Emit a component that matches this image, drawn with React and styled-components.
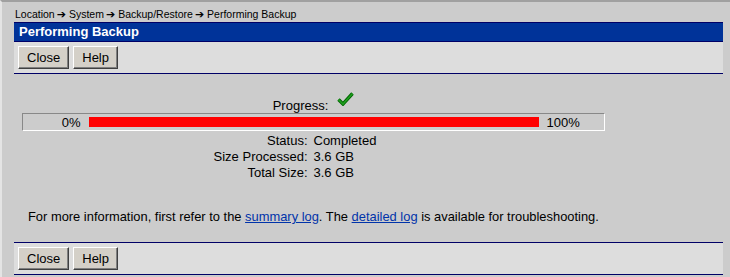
import React from 'react';
import styled, { createGlobalStyle } from 'styled-components';

const GlobalStyle = createGlobalStyle`
  html, body {
    margin: 0;
    padding: 0;
    background: #cccccc;
  }
  body {
    font-family: "Liberation Sans", Arial, sans-serif;
    font-size: 13px;
    color: #000;
  }
`;

const Page = styled.div`
  box-sizing: border-box;
  height: 277px;
  border-top: 2px solid #a0a0a0;
  border-left: 2px solid #e4e4e4;
  padding: 0 7px 0 12px;
  overflow: hidden;
`;

const Breadcrumb = styled.div`
  padding: 4px 0 0 1px;
  height: 16px;
  line-height: 16px;
  font-size: 10.5px;
  white-space: nowrap;
`;

const Arrow = styled.span`
  font-family: "DejaVu Sans", sans-serif;
  font-size: 11px;
  font-weight: bold;
  margin: 0 3px 0 2px;
`;

const TitleBar = styled.div`
  background: #003399;
  border-top: 1px solid #000066;
  border-bottom: 1px solid #000066;
  height: 18px;
  line-height: 18px;
  padding-left: 5px;
  color: #fff;
  font-weight: bold;
  font-size: 13px;
`;

const Toolbar = styled.div`
  display: flex;
  gap: 4px;
  background: #dddddd;
  padding: 4px;
  border-bottom: 1px solid #000066;
  ${p => p.$bottom && `border-top: 1px solid #000066;`}
`;

const Button = styled.button`
  box-sizing: border-box;
  height: 23px;
  padding: 0 8px;
  background: #d4d0c8;
  font-family: "Liberation Sans", Arial, sans-serif;
  font-size: 13px;
  color: #000;
  border: 1px solid;
  border-color: #ffffff #404040 #404040 #ffffff;
  box-shadow: inset -1px -1px 0 #808080;
`;

const Body = styled.div`
  height: 168px;
  padding-top: 18px;
  box-sizing: border-box;
`;

const Progress = styled.div`
  width: 583px;
  margin-left: 8px;
`;

const ProgressHead = styled.div`
  display: flex;
  justify-content: center;
  align-items: flex-end;
  height: 21px;
  line-height: 15px;
`;

const Check = styled.svg`
  margin: 0 0 7px 9px;
`;

const Bar = styled.div`
  box-sizing: border-box;
  height: 18px;
  display: grid;
  grid-template-columns: 1fr 450px 1fr;
  align-items: center;
  border: 1px solid;
  border-color: #888888 #ffffff #ffffff #888888;
`;

const Pct = styled.span`
  text-align: ${p => (p.$end ? 'left' : 'right')};
  padding: ${p => (p.$end ? '0 0 0 8px' : '0 8px 0 0')};
`;

const Fill = styled.div`
  height: 10px;
  background: #ff0000;
`;

const Stats = styled.div`
  margin-top: 2px;
  display: grid;
  grid-template-columns: 1fr 1fr;
  line-height: 16px;
`;

const Label = styled.span`
  text-align: right;
  padding-right: 6px;
`;

const Info = styled.p`
  margin: 28px 0 0 14px;
  line-height: 16px;
  font-size: 12.9px;
`;

const Link = styled.a`
  color: #0033aa;
  text-decoration: underline;
`;

const Buttons = ({ bottom }) => (
  <Toolbar $bottom={bottom}>
    <Button>Close</Button>
    <Button>Help</Button>
  </Toolbar>
);

const stats = [
  ['Status:', 'Completed'],
  ['Size Processed:', '3.6 GB'],
  ['Total Size:', '3.6 GB'],
];

export default function App() {
  return (
    <Page>
      <GlobalStyle />
      <Breadcrumb>
        Location<Arrow>➔</Arrow>System<Arrow>➔</Arrow>Backup/Restore<Arrow>➔</Arrow>Performing Backup
      </Breadcrumb>
      <TitleBar>Performing Backup</TitleBar>
      <Buttons />
      <Body>
        <Progress>
          <ProgressHead>
            Progress:
            <Check width="17" height="14" viewBox="0 0 17 14">
              <path d="M1.5 7.5 L6 12 L15.5 1.5" fill="none" stroke="#006600" strokeWidth="3.4" />
              <path d="M1.5 7.5 L6 12 L15.5 1.5" fill="none" stroke="#1f9f1f" strokeWidth="1.6" />
            </Check>
          </ProgressHead>
          <Bar>
            <Pct>0%</Pct>
            <Fill style={{ width: '100%' }} />
            <Pct $end>100%</Pct>
          </Bar>
          <Stats>
            {stats.map(([k, v]) => (
              <React.Fragment key={k}>
                <Label>{k}</Label>
                <span>{v}</span>
              </React.Fragment>
            ))}
          </Stats>
        </Progress>
        <Info>
          For more information, first refer to the <Link href="#">summary log</Link>. The{' '}
          <Link href="#">detailed log</Link> is available for troubleshooting.
        </Info>
      </Body>
      <Buttons bottom />
    </Page>
  );
}
